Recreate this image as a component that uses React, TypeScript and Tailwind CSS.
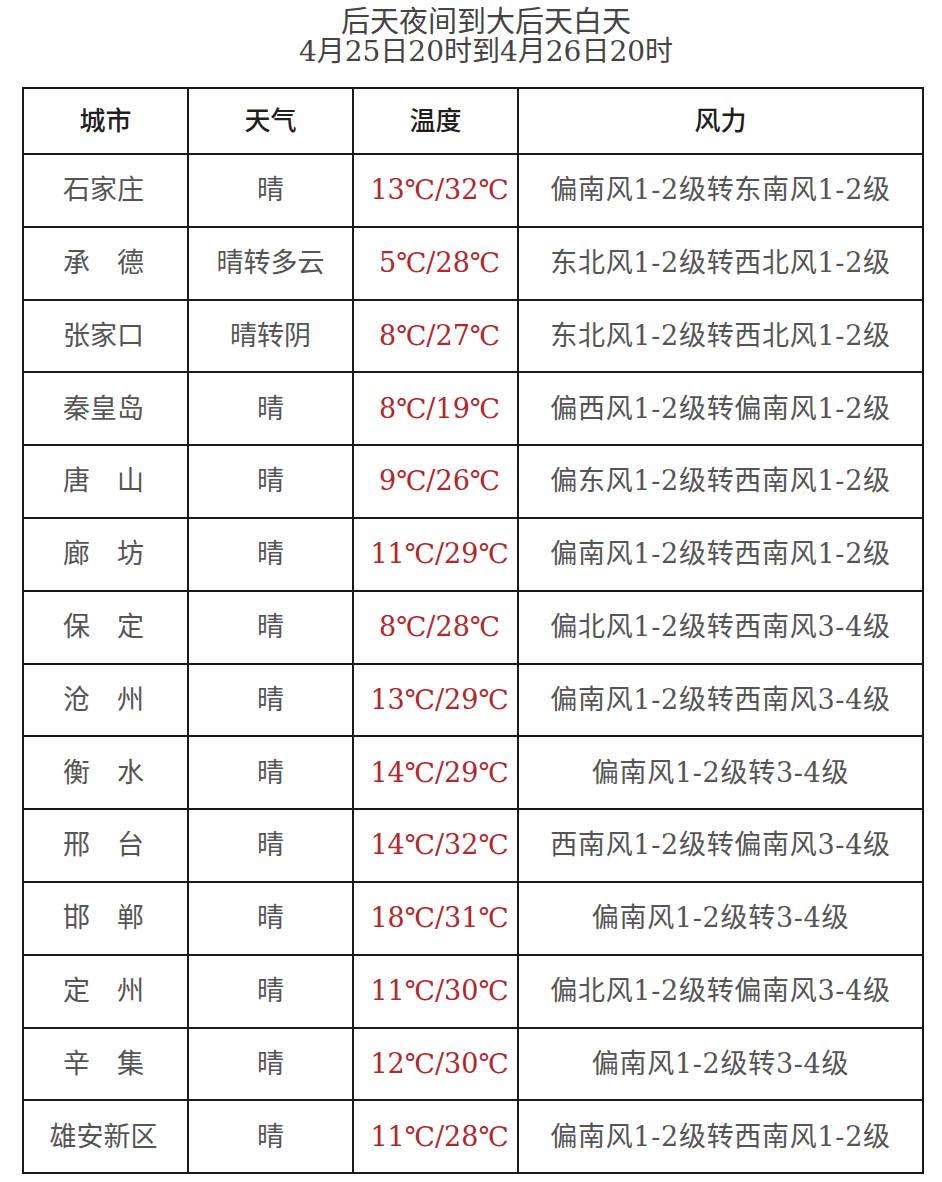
import React from 'react';

type Row = { city: string; weather: string; temp: string; wind: string };

const rows: Row[] = [
    { city: '石家庄', weather: '晴', temp: '13℃/32℃', wind: '偏南风1-2级转东南风1-2级' },
    { city: '承　德', weather: '晴转多云', temp: '5℃/28℃', wind: '东北风1-2级转西北风1-2级' },
    { city: '张家口', weather: '晴转阴', temp: '8℃/27℃', wind: '东北风1-2级转西北风1-2级' },
    { city: '秦皇岛', weather: '晴', temp: '8℃/19℃', wind: '偏西风1-2级转偏南风1-2级' },
    { city: '唐　山', weather: '晴', temp: '9℃/26℃', wind: '偏东风1-2级转西南风1-2级' },
    { city: '廊　坊', weather: '晴', temp: '11℃/29℃', wind: '偏南风1-2级转西南风1-2级' },
    { city: '保　定', weather: '晴', temp: '8℃/28℃', wind: '偏北风1-2级转西南风3-4级' },
    { city: '沧　州', weather: '晴', temp: '13℃/29℃', wind: '偏南风1-2级转西南风3-4级' },
    { city: '衡　水', weather: '晴', temp: '14℃/29℃', wind: '偏南风1-2级转3-4级' },
    { city: '邢　台', weather: '晴', temp: '14℃/32℃', wind: '西南风1-2级转偏南风3-4级' },
    { city: '邯　郸', weather: '晴', temp: '18℃/31℃', wind: '偏南风1-2级转3-4级' },
    { city: '定　州', weather: '晴', temp: '11℃/30℃', wind: '偏北风1-2级转偏南风3-4级' },
    { city: '辛　集', weather: '晴', temp: '12℃/30℃', wind: '偏南风1-2级转3-4级' },
    { city: '雄安新区', weather: '晴', temp: '11℃/28℃', wind: '偏南风1-2级转西南风1-2级' },
];

const font = { fontFamily: '"DejaVu Serif", "Noto Sans CJK SC", serif' };

const cell = 'border-2 border-[#1a1a1a] text-center align-middle';

const App: React.FC = () => (
    <div className="w-[942px] min-h-[1182px] bg-white" style={font}>
        <div className="pt-[7px] pl-[30px] mb-[20px] text-center leading-[30px] text-[#444]">
            <div className="text-[29px]">后天夜间到大后天白天</div>
            <div className="text-[28px]">4月25日20时到4月26日20时</div>
        </div>
        <table className="ml-[22px] w-[900px] table-fixed border-collapse">
            <colgroup>
                <col className="w-[165px]" />
                <col className="w-[165px]" />
                <col className="w-[165px]" />
                <col className="w-[405px]" />
            </colgroup>
            <thead>
                <tr className="h-[66px] text-[26px] text-[#1f1f1f]">
                    {['城市', '天气', '温度', '风力'].map((h) => (
                        <th key={h} className={`${cell} font-medium`}>
                            {h}
                        </th>
                    ))}
                </tr>
            </thead>
            <tbody>
                {rows.map((r) => (
                    <tr key={r.city} className="h-[72.8px] text-[27px] text-[#555]">
                        <td className={`${cell} pr-[4px]`}>{r.city}</td>
                        <td className={cell}>{r.weather}</td>
                        <td className={`${cell} pl-[8px] text-[#b3262a]`}>{r.temp}</td>
                        <td className={`${cell} tracking-[0.7px]`}>{r.wind}</td>
                    </tr>
                ))}
            </tbody>
        </table>
    </div>
);

export default App;
